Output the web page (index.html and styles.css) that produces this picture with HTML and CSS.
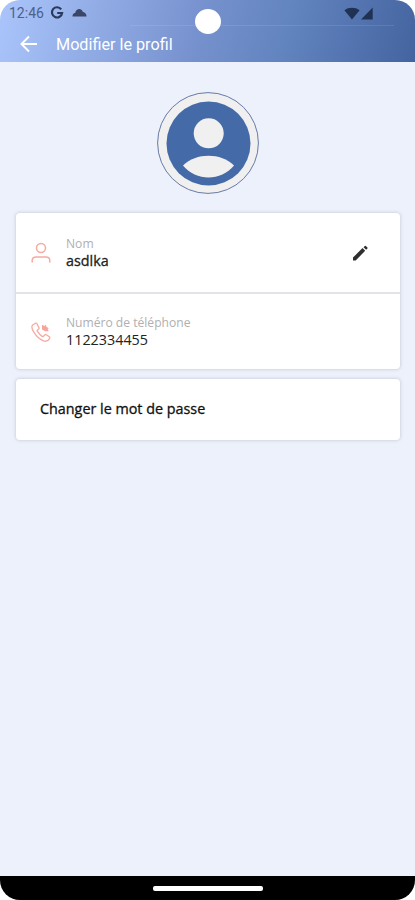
FILE: index.html
```html
<!DOCTYPE html>
<html lang="fr">
<head>
    <meta charset="UTF-8">
    <title>Modifier le profil</title>
    <meta name="viewport" content="width=device-width, initial-scale=1">
    <link rel="stylesheet" href="styles.css">
</head>
<body>
    <div class="phone">
        <header class="header">
            <div class="status-bar">
                <span class="time">12:46</span>
                <svg class="google" width="14" height="14" viewBox="0 0 14 14"><path d="M11.2 3.4A5.1 5.1 0 1 0 12.1 7H7.2" fill="none" stroke="#2b3b5d" stroke-width="2.2"/></svg>
                <svg class="cloud" width="15" height="10" viewBox="0 0 15 10"><path d="M.5 8.500Q.5 5.500 3.300 4.800C4 .4 9.500-.2 10.700 3.700Q14.500 4.600 14.500 8.500z" fill="#3b4667"/></svg>
                <svg class="wifi" width="16" height="13" viewBox="0 0 16 13"><path d="M8 12.600L.4 3.200C4.500-.1 11.500-.1 15.600 3.200z" fill="#1f3254"/></svg>
                <svg class="signal" width="12" height="13" viewBox="0 0 12 13"><path d="M0 12.500L11.700.6v11.900z" fill="#1f3254"/></svg>
            </div>
            <div class="camera"></div>
            <div class="toolbar">
                <svg class="back" width="18" height="18" viewBox="0 0 18 18"><path d="M17 9H2M9 1.500L1.500 9 9 16.500" fill="none" stroke="#fff" stroke-width="2"/></svg>
                <h1>Modifier le profil</h1>
            </div>
        </header>

        <main class="content">
            <div class="avatar">
                <svg width="102" height="102" viewBox="0 0 102 102">
                    <circle cx="51" cy="51" r="50.400" fill="#f0f0f0" stroke="#6879a8" stroke-width="1"/>
                    <circle cx="51.500" cy="51.500" r="42" fill="#456aa8"/>
                    <circle cx="51.700" cy="41.300" r="15" fill="#f0f0f0"/>
                    <path d="M26 73.500C39 60.500 64 60.500 77 73.500C64 89.500 39 89.500 26 73.500z" fill="#f0f0f0"/>
                </svg>
            </div>

            <section class="card">
                <div class="row row-name">
                    <svg class="row-icon" width="20" height="22" viewBox="0 0 20 22"><g fill="none" stroke="#f6aaa1" stroke-width="1.500" stroke-linecap="round"><circle cx="10" cy="6" r="4.500"/><path d="M1.200 20v-1.500q0-3.500 4-3.500h9.600q4 0 4 3.500V20"/></g></svg>
                    <div class="field">
                        <span class="label">Nom</span>
                        <span class="value value-name">asdlka</span>
                    </div>
                    <svg class="edit" width="16" height="16" viewBox="0 0 16 16"><path d="M1 15.400v-2.800L10.500 3.100l2.700 2.700-9.500 9.600zM11.500 2.200l1.400-1.300q.5-.5 1 0l1.500 1.500q.5.500 0 1L14.100 4.800z" fill="#2d2f31"/></svg>
                </div>
                <div class="row row-phone">
                    <svg class="row-icon" width="20" height="22" viewBox="0 0 20 22"><g fill="none" stroke="#f6aaa1" stroke-width="1.300" stroke-linejoin="round"><path d="M4.600 2.200L1.900 3.800C.2 5 .9 8 3 11.300c2.500 4 5.800 7.200 9.700 8.600 2.400.8 4.500.2 6-2.600q.4-.9-.4-1.500l-3-2q-.9-.6-1.600.2l-1.200 1.300q-.6.600-1.300.1C9 13.900 7.600 12.300 6.300 10.200q-.4-.7.300-1.200l1-.8q.8-.7.300-1.500L6 2.700q-.5-.9-1.400-.5z"/></g><path d="M11 8.500V3.800l2.600 1.200L15 3.400l.3 2.400 2.500 1.400-1.200.8 1.200 2.200h-3.500z" fill="#f8a39c"/></svg>
                    <div class="field">
                        <span class="label">Numéro de téléphone</span>
                        <span class="value value-phone">1122334455</span>
                    </div>
                </div>
            </section>

            <section class="card">
                <div class="row row-password">Changer le mot de passe</div>
            </section>
        </main>

        <footer class="nav-bar">
            <div class="handle"></div>
        </footer>
    </div>
</body>
</html>
```
FILE: styles.css
```css
* {
    box-sizing: border-box;
}
body {
    margin: 0;
    background: #fff;
    font-family: "Open Sans", "Noto Sans", sans-serif;
}
.phone {
    display: flex;
    flex-direction: column;
    height: 900px;
    overflow: hidden;
    border-radius: 20px;
    background: #edf1fb;
}
.header {
    position: relative;
    height: 62px;
    background: linear-gradient(105deg, #abc5fc 0%, #7893cf 46%, #6284bf 68%, #4464a0 100%);
    font-family: Roboto, sans-serif;
}
/* thin highlight under the status icons */
.header::after {
    content: "";
    position: absolute;
    top: 25px;
    left: 130px;
    right: 21px;
    height: 1px;
    background: rgba(255, 255, 255, 0.1);
}
.status-bar {
    display: flex;
    align-items: center;
    height: 26px;
    padding: 0 42px 0 9px;
}
.time {
    width: 36px;
    font-size: 14px;
    color: #4c618b;
}
.google {
    margin-left: 5px;
}
.cloud {
    margin-left: 8px;
}
.wifi {
    margin-left: auto;
}
.signal {
    margin-left: 1px;
}
.camera {
    position: absolute;
    z-index: 1;
    top: 9px;
    left: 195px;
    width: 26px;
    height: 25px;
    border-radius: 50%;
    background: #fff;
}
.toolbar {
    display: flex;
    align-items: center;
    height: 36px;
    padding-left: 20px;
}
h1 {
    margin: 1px 0 0 18px;
    font-size: 16.200px;
    font-weight: 400;
    color: #fff;
}
.content {
    flex: 1;
    padding: 30px 15px 0;
}
.avatar {
    display: flex;
    justify-content: center;
    height: 102px;
    margin-bottom: 19px;
}
.card {
    margin: 0 0 10px 1px;
    background: #fff;
    border-radius: 4px;
    box-shadow: 0 0 3px 1px rgba(110, 115, 135, 0.22);
}
.row {
    display: flex;
    align-items: center;
    padding: 0 32px 0 15px;
}
.row-name {
    height: 81px;
    border-bottom: 2px solid #e2e3e7;
}
.row-phone {
    height: 75px;
}
.row-icon {
    margin-right: 15px;
}
.field {
    display: flex;
    flex-direction: column;
}
.label {
    font-size: 12.100px;
    line-height: 17px;
    color: #b0b0b0;
}
.value {
    font-size: 14.350px;
    line-height: 18px;
    color: #222;
}
.value-name {
    -webkit-text-stroke: 0.3px #222;
}
.edit {
    margin-left: auto;
}
.row-password {
    height: 61px;
    padding: 0 24px 3px;
    font-size: 14.350px;
    color: #111;
    -webkit-text-stroke: 0.3px #111;
}
.nav-bar {
    display: flex;
    justify-content: center;
    height: 24px;
    padding-top: 10px;
    background: #000;
}
.handle {
    width: 110px;
    height: 5px;
    border-radius: 2px;
    background: #fff;
}
```
